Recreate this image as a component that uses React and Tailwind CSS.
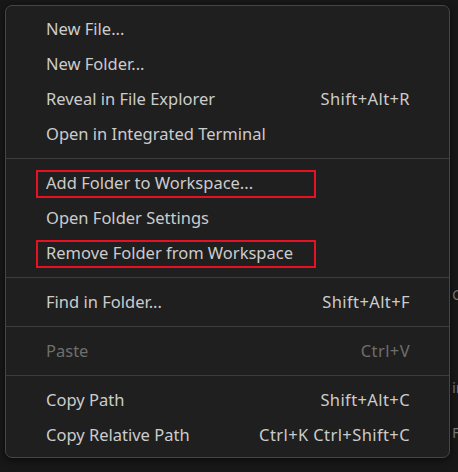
import React from "react";

const groups = [
  [
    { label: "New File..." },
    { label: "New Folder..." },
    { label: "Reveal in File Explorer", key: "Shift+Alt+R" },
    { label: "Open in Integrated Terminal" },
  ],
  [
    { label: "Add Folder to Workspace...", boxed: true },
    { label: "Open Folder Settings" },
    { label: "Remove Folder from Workspace", boxed: true },
  ],
  [{ label: "Find in Folder...", key: "Shift+Alt+F" }],
  [{ label: "Paste", key: "Ctrl+V", disabled: true }],
  [
    { label: "Copy Path", key: "Shift+Alt+C" },
    { label: "Copy Relative Path", key: "Ctrl+K Ctrl+Shift+C" },
  ],
];

function Item({ item }) {
  return (
    <div
      className={
        "relative flex h-[35px] items-center justify-between pl-[40px] pr-[39px] " +
        (item.disabled ? "text-[#6e6e6e]" : "text-[#cccccc]")
      }
    >
      <span>{item.label}</span>
      {item.key && <span className="tracking-[0.4px]">{item.key}</span>}
      {item.boxed && (
        <div className="pointer-events-none absolute left-[30px] top-[4px] h-[28px] w-[280px] border-2 border-[#e81123]" />
      )}
    </div>
  );
}

export default function App() {
  return (
    <div
      className="relative h-[472px] w-[458px] overflow-hidden bg-[#181818] pl-[5px] pt-[5px] text-[16.5px]"
      style={{ fontFamily: '"Noto Sans", "Open Sans", sans-serif' }}
    >
      <div className="pointer-events-none absolute left-[452px] top-0 flex flex-col text-[15px] leading-none text-[#7a7a7a]">
        <span className="mt-[287px]">Co</span>
        <span className="mt-[78px]">ir</span>
        <span className="mt-[30px]">Fi</span>
      </div>
      <div className="relative flex h-[453px] w-[445px] flex-col rounded-[7px] border border-[#454545] bg-[#1f1f1f] pb-[4px] pt-[6px] shadow-[0_2px_8px_rgba(0,0,0,0.6)]">
        {groups.map((g, gi) => (
          <React.Fragment key={gi}>
            {gi > 0 && (
              <div className="pb-[7px] pt-[6px]">
                <div className="h-px bg-[#3c3c3c]" />
              </div>
            )}
            {g.map((it) => (
              <Item key={it.label} item={it} />
            ))}
          </React.Fragment>
        ))}
      </div>
    </div>
  );
}
